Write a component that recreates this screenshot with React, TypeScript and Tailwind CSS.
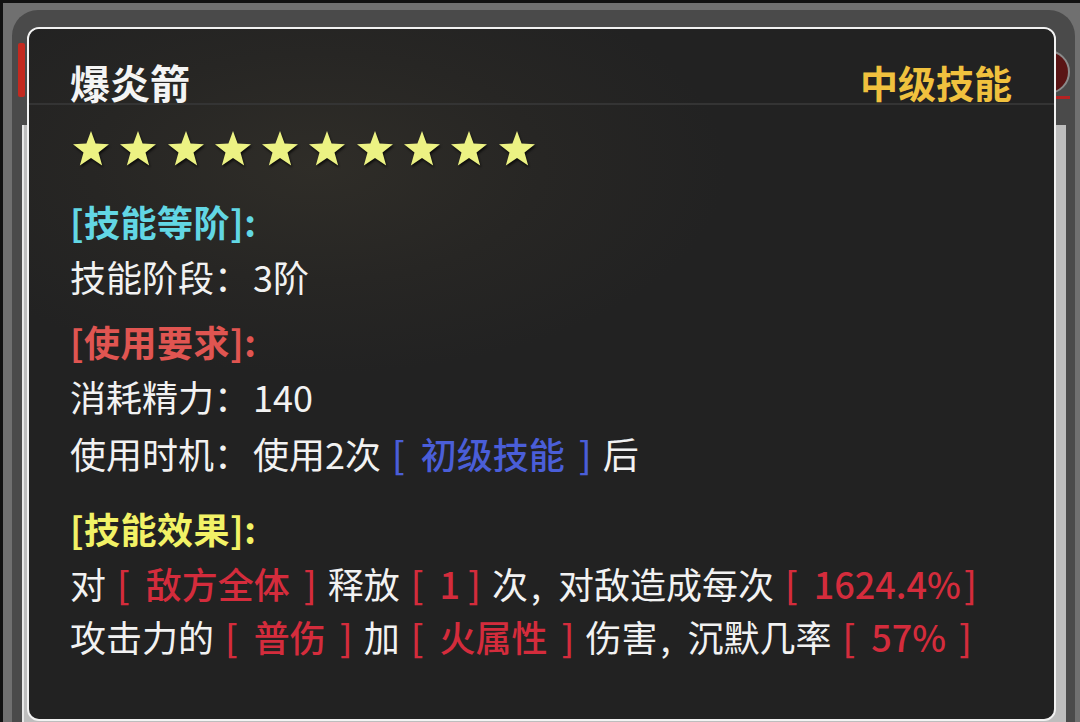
import React from "react";

const font = { fontFamily: '"Noto Sans CJK SC", "Noto Sans", sans-serif' };

function Star() {
  return (
    <svg width="40" height="40" viewBox="0 0 24 24" className="shrink-0 drop-shadow-[1px_2px_1px_rgba(0,0,0,0.7)]">
      <polygon
        points="12,1.2 14.75,8.7 22.8,9.1 16.5,14.1 18.7,21.9 12,17.4 5.3,21.9 7.5,14.1 1.2,9.1 9.25,8.7"
        fill="#ecf283"
      />
    </svg>
  );
}

function B({ text, color, right = "mr-[14px]" }: { text: string; color: string; right?: string }) {
  return (
    <span className={`mx-[11px] font-medium ${color}`}>
      <span>[</span>
      <span className={`ml-[16px] ${right}`}>{text}</span>
      <span>]</span>
    </span>
  );
}

const RED = "text-[#d42c3c]";
const BLUE = "text-[#4a5ed8]";

function Colon() {
  return <span className="inline-block w-[39px]">：</span>;
}

function Comma() {
  return <span className="inline-block w-[30px] pl-[3px]">,</span>;
}

export default function App() {
  return (
    <div className="relative w-[1080px] h-[722px] overflow-hidden bg-[#111111]" style={font}>
      {/* underlying app */}
      <div className="absolute inset-0 pt-[3px] pl-[3px]">
        <div className="h-full bg-[#707070] pt-[7px] pl-[9px] pr-[5px]">
          <div className="h-full rounded-t-[26px] bg-[#4a4a4a] flex flex-col pr-[9px]">
            <div className="h-[115px] flex justify-between pl-[6px] shrink-0">
              <div className="mt-[33px] w-[7px] h-[54px] bg-[#c4291f] rounded-[2px]" />
              <div className="flex flex-col items-end mr-[-4px]">
                <div className="mt-[40px] w-[44px] h-[44px] rounded-full bg-[#5a1414] border-2 border-[#8a8a8a]" />
                <div className="mt-[2px] w-[30px] h-[3px] bg-[#b52222]" />
              </div>
            </div>
            <div className="flex-1 ml-[10px] bg-[#bdbdbd] border-l-2 border-[#e8e8e8]" />
          </div>
        </div>
      </div>

      {/* tooltip */}
      <div className="absolute left-[27px] top-[27px] w-[1029px] h-[694px] rounded-[12px] border-2 border-[#f2f2f2] bg-[#222222] overflow-hidden">
        <div className="h-full bg-[radial-gradient(ellipse_40%_30%_at_28%_20%,#2f2d28_0%,#272624_55%,#222222_100%)]">
          <div className="h-[76px] pt-[32px] flex items-center justify-between pl-[41px] pr-[42px] border-b-2 border-[#343434]">
            <span className="text-[40px] leading-none font-semibold text-[#f4f4f4]">爆炎箭</span>
            <span className="text-[38px] leading-none font-semibold text-[#f0c13e]">中级技能</span>
          </div>

          <div className="flex gap-[7.3px] pl-[42px] mt-[24px]">
            {Array.from({ length: 10 }).map((_, i) => (
              <Star key={i} />
            ))}
          </div>

          <div className="pl-[41px] mt-[25px] text-[36px] leading-[55px] text-[#f2f2f2] whitespace-nowrap">
            <div className="font-bold text-[#62d7e4] tracking-[0.5px]">[技能等阶]:</div>
            <div>技能阶段<Colon />3阶</div>

            <div className="mt-[10px] font-bold text-[#e05551] tracking-[0.5px]">[使用要求]:</div>
            <div>消耗精力<Colon />140</div>
            <div className="mt-[2px]">
              使用时机<Colon />使用2次<B text="初级技能" color={BLUE} />后
            </div>

            <div className="mt-[20px] font-bold text-[#f2f266] tracking-[0.5px]">[技能效果]:</div>
            <div>
              对<B text="敌方全体" color={RED} />释放<B text="1" color={RED} right="mr-[8px]" />次<Comma />对敌造成每次
              <B text="1624.4%" color={RED} right="mr-[3px]" />
            </div>
            <div className="mt-[-2px]">
              攻击力的<B text="普伤" color={RED} />加<B text="火属性" color={RED} />伤害<Comma />沉默几率
              <B text="57%" color={RED} right="mr-[13px]" />
            </div>
          </div>
        </div>
      </div>
    </div>
  );
}
